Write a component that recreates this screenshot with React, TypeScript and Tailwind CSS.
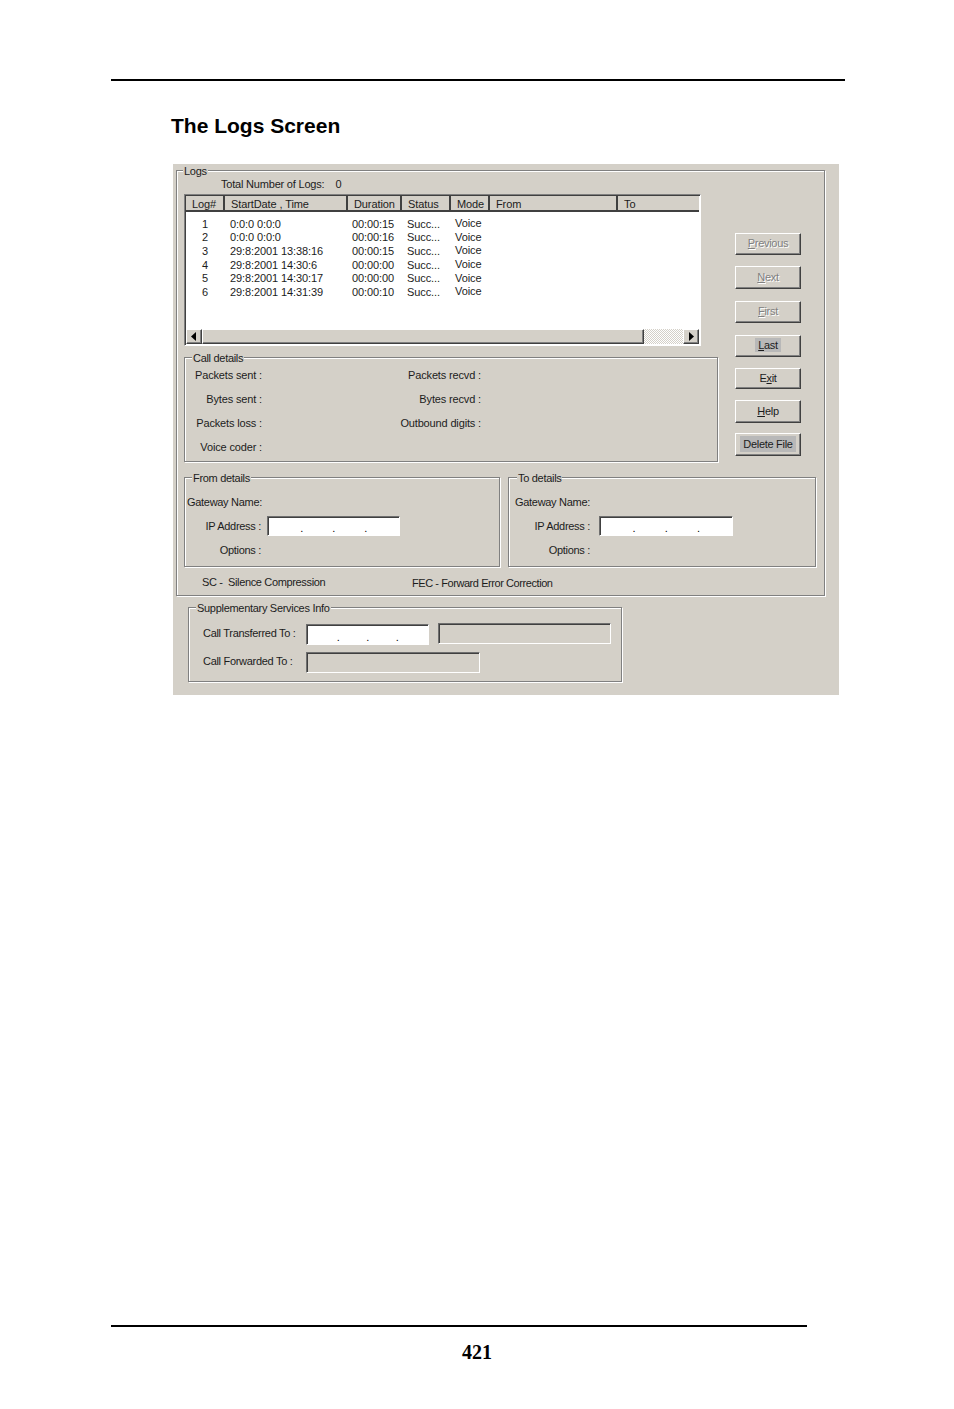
const sunken =
  "border border-[#6f6f6f] border-r-white border-b-white shadow-[inset_1px_1px_0_#404040]";
const raised =
  "border border-white border-r-[#404040] border-b-[#404040] shadow-[inset_-1px_-1px_0_#808080]";

const columns = [
  { label: "Log#", width: "w-[39px]" },
  { label: "StartDate , Time", width: "w-[123px]" },
  { label: "Duration", width: "w-[54px]" },
  { label: "Status", width: "w-[49px]" },
  { label: "Mode", width: "w-[39px]" },
  { label: "From", width: "w-[128px]" },
  { label: "To", width: "flex-1" },
];

const logs = [
  ["1", "0:0:0 0:0:0", "00:00:15"],
  ["2", "0:0:0 0:0:0", "00:00:16"],
  ["3", "29:8:2001 13:38:16", "00:00:15"],
  ["4", "29:8:2001 14:30:6", "00:00:00"],
  ["5", "29:8:2001 14:30:17", "00:00:00"],
  ["6", "29:8:2001 14:31:39", "00:00:10"],
];

function Group({
  legend,
  legendClass,
  className,
  children,
}: {
  legend: string;
  legendClass: string;
  className: string;
  children?: React.ReactNode;
}) {
  return (
    <div
      className={`relative border border-[#808080] shadow-[inset_1px_1px_0_#fff,1px_1px_0_#fff] ${className}`}
    >
      <span
        className={`absolute top-[-7px] bg-[#d4d0c8] px-px leading-[14px] whitespace-nowrap ${legendClass}`}
      >
        {legend}
      </span>
      {children}
    </div>
  );
}

function IpInput({ className }: { className: string }) {
  return (
    <div
      className={`flex items-end bg-white pl-[3px] text-[11px] leading-[14px] text-black ${sunken} ${className}`}
    >
      <span className="w-1/4 text-right">.</span>
      <span className="w-1/4 text-right">.</span>
      <span className="w-1/4 text-right">.</span>
    </div>
  );
}

function DialogButton({
  className,
  disabled,
  children,
}: {
  className: string;
  disabled?: boolean;
  children: React.ReactNode;
}) {
  return (
    <div
      className={`flex w-[66px] items-center justify-center pb-[2px] ${raised} ${
        disabled ? "text-[#808080] [text-shadow:1px_1px_0_#fff]" : ""
      } ${className}`}
    >
      {children}
    </div>
  );
}

function ScrollArrow({ points }: { points: string }) {
  return (
    <div className={`flex h-[15px] w-[16px] items-center justify-center bg-[#d4d0c8] ${raised}`}>
      <svg width="6" height="9" viewBox="0 0 6 9">
        <polygon points={points} fill="#000" />
      </svg>
    </div>
  );
}

function AddressDetails({
  legend,
  legendClass,
  className,
  labelWidth,
  inputClass,
}: {
  legend: string;
  legendClass: string;
  className: string;
  labelWidth: string;
  inputClass: string;
}) {
  return (
    <Group legend={legend} legendClass={legendClass} className={className}>
      <div className="flex flex-col pt-[12px] pl-[2px]">
        <div className="flex h-[24px] items-center">Gateway Name:</div>
        <div className="flex h-[24px] items-center">
          <span className={`text-right ${labelWidth}`}>IP Address :</span>
          <IpInput className={inputClass} />
        </div>
        <div className="flex h-[24px] items-center">
          <span className={`text-right ${labelWidth}`}>Options :</span>
        </div>
      </div>
    </Group>
  );
}

export default function App() {
  return (
    <div className="h-[1409px] w-[954px] overflow-hidden bg-white pt-[79px] font-['Liberation_Sans',sans-serif] text-black">
      <div className="ml-[111px] h-[2px] w-[734px] bg-black" />
      <h1 className="mt-[33px] ml-[171px] h-[24px] text-[21px] leading-[24px] font-bold">
        The Logs Screen
      </h1>

      <div className="mt-[26px] ml-[173px] h-[531px] w-[666px] bg-[#d4d0c8] pt-[6px] text-[11px] leading-[14px] tracking-[-0.3px] text-[#1c1c1c]">
        <Group
          legend="Logs"
          legendClass="left-[6px]"
          className="ml-[3px] h-[426px] w-[649px] pt-[6px] pl-[7px]"
        >
          <div className="flex">
            <div className="w-[534px]">
              <div className="flex h-[14px] pl-[37px] tracking-[-0.2px]">
                <span>Total Number of Logs:</span>
                <span className="ml-[11px]">0</span>
              </div>

              <div className="mt-[3px] flex h-[152px] w-[517px] flex-col bg-white border border-[#808080] border-r-white border-b-white shadow-[inset_1px_1px_0_#404040]">
                <div className="mx-px mt-px flex h-[16px] bg-[#d4d0c8] tracking-[-0.1px] shadow-[inset_0_-2px_0_#404040]">
                  {columns.map((column) => (
                    <div
                      key={column.label}
                      className={`border-r-2 border-r-[#404040] pb-[2px] pl-[6px] leading-[17px] last:border-r-0 ${column.width}`}
                    >
                      {column.label}
                    </div>
                  ))}
                </div>
                <div className="flex flex-1 flex-col pt-[5px] pl-px tracking-[-0.1px]">
                  {logs.map(([num, date, duration]) => (
                    <div key={num} className="flex h-[13.6px] items-center">
                      <span className="w-[39px] pl-[16px]">{num}</span>
                      <span className="w-[122px] pl-[5px]">{date}</span>
                      <span className="w-[55px] pl-[5px]">{duration}</span>
                      <span className="w-[48px] pl-[5px]">Succ...</span>
                      <span className="-mt-px pl-[5px]">Voice</span>
                    </div>
                  ))}
                </div>
                <div className="mx-px mb-px flex h-[15px]">
                  <ScrollArrow points="5,0 5,9 0,4.5" />
                  <div className={`w-[442px] bg-[#d4d0c8] ${raised}`} />
                  <div className="flex-1 bg-[repeating-conic-gradient(#d4d0c8_0_25%,#fff_0_50%)] bg-[length:2px_2px]" />
                  <ScrollArrow points="1,0 1,9 6,4.5" />
                </div>
              </div>

              <Group
                legend="Call details"
                legendClass="left-[7px]"
                className="mt-[11px] h-[105px] w-[534px] pt-[5px]"
              >
                <div className="grid grid-cols-[77px_219px] auto-rows-[24px] items-center text-right tracking-[-0.15px]">
                  <span>Packets sent :</span>
                  <span>Packets recvd :</span>
                  <span>Bytes sent :</span>
                  <span>Bytes recvd :</span>
                  <span>Packets loss :</span>
                  <span>Outbound digits :</span>
                  <span>Voice coder :</span>
                </div>
              </Group>
            </div>

            <div className="ml-[17px] flex flex-col pt-[56px]">
              <DialogButton disabled className="h-[22px]">
                <span>
                  <u>P</u>revious
                </span>
              </DialogButton>
              <DialogButton disabled className="mt-[11px] h-[23px]">
                <span>
                  <u>N</u>ext
                </span>
              </DialogButton>
              <DialogButton disabled className="mt-[12px] h-[22px]">
                <span>
                  <u>F</u>irst
                </span>
              </DialogButton>
              <DialogButton className="mt-[12px] h-[22px]">
                <span className="bg-[#b8b8b8] px-[3px]">
                  <u>L</u>ast
                </span>
              </DialogButton>
              <DialogButton className="mt-[11px] h-[21px]">
                <span>
                  E<u>x</u>it
                </span>
              </DialogButton>
              <DialogButton className="mt-[11px] h-[23px]">
                <span>
                  <u>H</u>elp
                </span>
              </DialogButton>
              <DialogButton className="mt-[10px] h-[23px]">
                <span className="bg-[#b8b8b8] px-[3px] py-px whitespace-nowrap">Delete File</span>
              </DialogButton>
            </div>
          </div>

          <div className="mt-[15px] flex">
            <AddressDetails
              legend="From details"
              legendClass="left-[7px]"
              className="h-[90px] w-[316px]"
              labelWidth="w-[74px]"
              inputClass="ml-[6px] h-[20px] w-[133px]"
            />
            <AddressDetails
              legend="To details"
              legendClass="left-[8px]"
              className="ml-[8px] h-[90px] w-[308px] pl-[4px]"
              labelWidth="w-[75px]"
              inputClass="ml-[9px] h-[20px] w-[134px]"
            />
          </div>

          <div className="mt-[8px] flex h-[14px] pl-[18px]">
            <span className="w-[210px] tracking-[-0.35px]">SC -&nbsp; Silence Compression</span>
            <span className="mt-px tracking-[-0.43px]">FEC - Forward Error Correction</span>
          </div>
        </Group>

        <Group
          legend="Supplementary Services Info"
          legendClass="left-[7px]"
          className="mt-[11px] ml-[15px] h-[75px] w-[434px] pt-[13px] pl-[14px]"
        >
          <div className="flex h-[24px] items-center">
            <span className="w-[103px]">Call Transferred To :</span>
            <IpInput className="mt-[3px] h-[21px] w-[123px]" />
            <div className={`ml-[9px] h-[21px] w-[173px] ${sunken}`} />
          </div>
          <div className="mt-[4px] flex h-[24px] items-center">
            <span className="w-[103px]">Call Forwarded To :</span>
            <div className={`mt-[3px] h-[21px] w-[174px] ${sunken}`} />
          </div>
        </Group>
      </div>

      <div className="mt-[630px] ml-[111px] h-[2px] w-[696px] bg-black" />
      <p className="mt-[13px] text-center font-['Liberation_Serif',serif] text-[20px] leading-[24px] font-bold">
        421
      </p>
    </div>
  );
}
